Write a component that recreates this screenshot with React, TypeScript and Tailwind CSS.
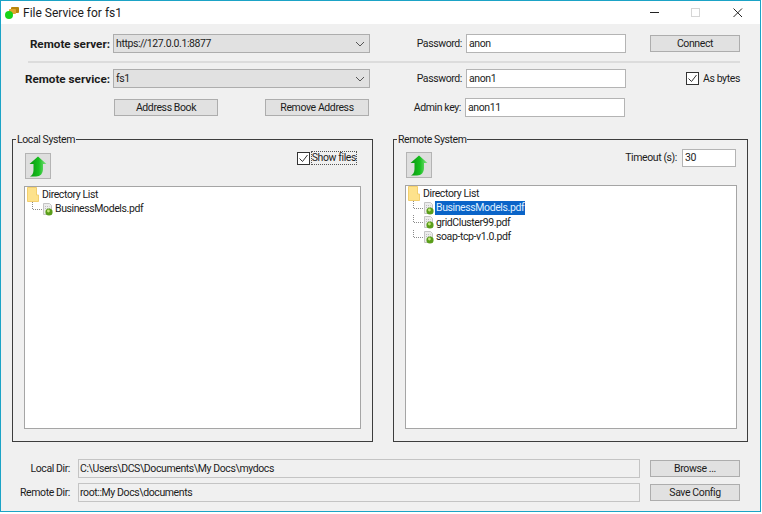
import React from "react";

const font = { fontFamily: 'Roboto, "Noto Sans", sans-serif' };

function Chevron() {
  return (
    <svg width="10" height="6" viewBox="0 0 10 6" className="shrink-0">
      <path d="M1 1l4 4 4-4" fill="none" stroke="#555" strokeWidth="1" />
    </svg>
  );
}

function Combo({ value }: { value: string }) {
  return (
    <div className="ml-[3px] flex h-[19px] w-[257px] items-center justify-between border border-[#adadad] bg-[#e1e1e1] pl-[2px] pr-[4px]">
      <span>{value}</span>
      <Chevron />
    </div>
  );
}

function Label({ children, className }: { children: React.ReactNode; className: string }) {
  return <span className={`shrink-0 text-right ${className}`}>{children}</span>;
}

function Entry({ value }: { value: string }) {
  return (
    <div className="ml-[4px] flex h-[19px] w-[160px] items-center border border-[#b4b4b4] bg-white pl-[2px]">
      {value}
    </div>
  );
}

function Btn({ children, className }: { children: React.ReactNode; className: string }) {
  return (
    <div className={`flex h-[17px] items-center justify-center border border-[#adadad] bg-[#e1e1e1] ${className}`}>
      {children}
    </div>
  );
}

function Check() {
  return (
    <svg width="13" height="13" viewBox="0 0 13 13" className="shrink-0">
      <rect x="0.5" y="0.5" width="12" height="12" fill="#fff" stroke="#333" />
      <path d="M2.5 6.5l3 3 5-6.5" fill="none" stroke="#333" strokeWidth="1" />
    </svg>
  );
}

function UpArrow({ id }: { id: string }) {
  return (
    <svg width="18" height="21" viewBox="0 0 18 21">
      <defs>
        <linearGradient id={id} x1="0" y1="0" x2="1" y2="0">
          <stop offset="0" stopColor="#0a9410" />
          <stop offset="0.55" stopColor="#16c01e" />
          <stop offset="1" stopColor="#8ae08a" />
        </linearGradient>
      </defs>
      <path
        d="M9 0.5L17.5 8H14V13C14 17.5 11.5 20.5 7 20.5H1C3 19.5 4.5 17.5 4.5 14V8H0.5Z"
        fill={`url(#${id})`}
      />
    </svg>
  );
}

function UpButton({ id }: { id: string }) {
  return (
    <div className="flex h-[26px] w-[26px] items-center justify-center border border-[#b4b4b4] bg-[#dedede]">
      <UpArrow id={id} />
    </div>
  );
}

function Folder() {
  return (
    <svg width="12" height="15" viewBox="0 0 12 15" className="shrink-0">
      <path d="M0.5 0.5H9.5V8H11.5V14.5H0.5Z" fill="#fde28c" stroke="#f2cf6e" />
    </svg>
  );
}

function FileIcon() {
  return (
    <svg width="10" height="13" viewBox="0 0 10 13" className="shrink-0">
      <path d="M0.5 0.5H6.5L8.5 2.5V11.5H0.5Z" fill="#ececec" stroke="#c4c4c4" />
      <path d="M2 3.5H6.5M2 5.5H7" stroke="#bdbdbd" strokeDasharray="1 1" />
      <circle cx="6" cy="9" r="3.6" fill="#5a9e1a" />
      <circle cx="5.4" cy="8" r="1.4" fill="#c4e67c" />
    </svg>
  );
}

function Connector() {
  return (
    <svg width="11" height="15" viewBox="0 0 11 15" className="shrink-0">
      <path d="M0.5 0V7.5H11" fill="none" stroke="#8a8a8a" strokeDasharray="1 1" />
    </svg>
  );
}

function TreeRow({ name, selected }: { name: string; selected?: boolean }) {
  return (
    <div className="flex h-[14.5px] items-center pl-[7px]">
      <Connector />
      <FileIcon />
      <span className={`ml-[1px] px-[1px] leading-[14px] ${selected ? "bg-[#0a64c8] text-[#dfeeff]" : ""}`}>{name}</span>
    </div>
  );
}

function Tree({ files, className, selectedIndex }: { files: string[]; className: string; selectedIndex?: number }) {
  return (
    <div className={`border border-[#a5a5a5] bg-white ${className}`}>
      <div className="flex h-[15px] items-center pl-[2px]">
        <Folder />
        <span className="ml-[3px]">Directory List</span>
      </div>
      {files.map((f, i) => (
        <TreeRow key={f} name={f} selected={i === selectedIndex} />
      ))}
    </div>
  );
}

function Group({ title, className, children }: { title: string; className: string; children: React.ReactNode }) {
  return (
    <fieldset className={`h-[311px] border border-[#3d3d3d] ${className}`}>
      <legend className="ml-[3px] px-[1px] pt-[2px] leading-[14px]">{title}</legend>
      {children}
    </fieldset>
  );
}

function DirRow({ label, value, btn, className }: { label: string; value: string; btn: string; className: string }) {
  return (
    <div className={`flex items-center ${className}`}>
      <Label className="w-[69px]">{label}</Label>
      <div className="ml-[8px] flex h-[19px] w-[562px] items-center border border-[#c4c4c4] bg-[#f0f0f0] pl-[1px]">
        {value}
      </div>
      <Btn className="ml-[10px] w-[90px]">{btn}</Btn>
    </div>
  );
}

export default function App() {
  return (
    <div className="h-[514px] w-[762px] bg-white text-[10.5px] leading-[14px] tracking-[-0.4px] text-[#1c1c1c]" style={font}>
      <div className="flex h-[512px] w-[761px] flex-col border border-[#1ba3c6] bg-[#f0f0f0]">
        <div className="flex h-[23px] items-center whitespace-nowrap bg-white">
          <svg width="16" height="14" viewBox="0 0 16 14" className="ml-[3px] shrink-0">
            <rect x="7" y="1" width="8" height="6" rx="1" fill="#b8860b" />
            <rect x="5" y="3" width="7" height="5" rx="1" fill="#e0a52e" />
            <circle cx="5" cy="9" r="4" fill="#18d418" />
          </svg>
          <span className="ml-[3px] text-[12px] tracking-normal">File Service for fs1</span>
          <svg width="10" height="10" viewBox="0 0 10 10" className="ml-auto">
            <path d="M0 4.5H9" stroke="#222" />
          </svg>
          <svg width="10" height="10" viewBox="0 0 10 10" className="ml-[31px]">
            <rect x="0.5" y="0.5" width="8" height="8" fill="none" stroke="#d6d6d6" />
          </svg>
          <svg width="10" height="10" viewBox="0 0 10 10" className="ml-[32px] mr-[17px]">
            <path d="M0.5 0.5l8.5 8.5M9 0.5L0.5 9" stroke="#222" />
          </svg>
        </div>

        <div className="mt-[10px] flex h-[19px] items-center">
          <Label className="w-[109px] text-[11.7px] font-bold tracking-normal">Remote server:</Label>
          <Combo value="https://127.0.0.1:8877" />
          <Label className="w-[92px]">Password:</Label>
          <Entry value="anon" />
          <Btn className="ml-[24px] w-[90px]">Connect</Btn>
        </div>
        <div className="ml-[27px] mt-[8px] h-[2px] w-[712px] bg-[#dcdcdc]" />
        <div className="mt-[6px] flex h-[19px] items-center">
          <Label className="w-[109px] text-[11.7px] font-bold tracking-normal">Remote service:</Label>
          <Combo value="fs1" />
          <Label className="w-[92px]">Password:</Label>
          <Entry value="anon1" />
          <div className="ml-[60px] flex items-center gap-[4px]">
            <Check />
            <span>As bytes</span>
          </div>
        </div>
        <div className="mt-[10px] flex h-[19px] items-center">
          <Btn className="ml-[113px] w-[104px]">Address Book</Btn>
          <Btn className="ml-[47px] w-[104px]">Remove Address</Btn>
          <Label className="w-[92px]">Admin key:</Label>
          <Entry value="anon11" />
        </div>

        <div className="mt-[14px] flex">
          <Group title="Local System" className="ml-[11px] w-[361px]">
            <div className="flex items-start justify-between pl-[12px] pr-[15px] pt-[6px]">
              <UpButton id="upLocal" />
              <div className="mt-[-2px] flex items-center gap-[1px]">
                <Check />
                <span className="border border-dotted border-[#555] leading-[12px]">Show files</span>
              </div>
            </div>
            <Tree files={["BusinessModels.pdf"]} className="ml-[11px] mt-[7px] h-[243px] w-[337px]" />
          </Group>
          <Group title="Remote System" className="ml-[20px] w-[355px]">
            <div className="flex items-start justify-between pl-[12px] pr-[11px] pt-[5px]">
              <UpButton id="upRemote" />
              <div className="mt-[-3px] flex items-center">
                <span>Timeout (s):</span>
                <div className="ml-[5px] flex h-[18px] w-[54px] items-center border border-[#b4b4b4] bg-white pl-[2px]">30</div>
              </div>
            </div>
            <Tree
              files={["BusinessModels.pdf", "gridCluster99.pdf", "soap-tcp-v1.0.pdf"]}
              selectedIndex={0}
              className="ml-[11px] mt-[7px] h-[244px] w-[332px]"
            />
          </Group>
        </div>

        <DirRow label="Local Dir:" value="C:\Users\DCS\Documents\My Docs\mydocs" btn="Browse ..." className="mt-[17px]" />
        <DirRow label="Remote Dir:" value="root::My Docs\documents" btn="Save Config" className="mt-[5px]" />
      </div>
    </div>
  );
}
